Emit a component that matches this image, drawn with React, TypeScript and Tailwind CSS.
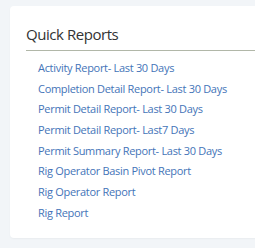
const reports = [
  "Activity Report- Last 30 Days",
  "Completion Detail Report- Last 30 Days",
  "Permit Detail Report- Last 30 Days",
  "Permit Detail Report- Last7 Days",
  "Permit Summary Report- Last 30 Days",
  "Rig Operator Basin Pivot Report",
  "Rig Operator Report",
  "Rig Report",
];

export default function App() {
  return (
    <div className="h-[248px] w-[255px] overflow-hidden bg-[#f2f5f8] pl-[10px] pt-[6px] font-['Open_Sans',sans-serif]">
      <div className="h-[232px] w-[260px] rounded-[4px] bg-white pl-4 pt-[17px] shadow-[0_1px_2px_rgba(0,0,0,0.04)]">
        <h2 className="text-[15px] leading-[22px] tracking-[-0.45px] text-[#333333]">Quick Reports</h2>
        <div className="mt-[5px] h-px bg-[#b1b7a8]" />
        <ul className="pl-3 pt-[7px]">
          {reports.map(r => (
            <li key={r} className="h-[20.7px] text-[11px] leading-[20.7px] tracking-[-0.3px] text-[#4474b8]">
              <a href="#">{r}</a>
            </li>
          ))}
        </ul>
      </div>
    </div>
  );
}
